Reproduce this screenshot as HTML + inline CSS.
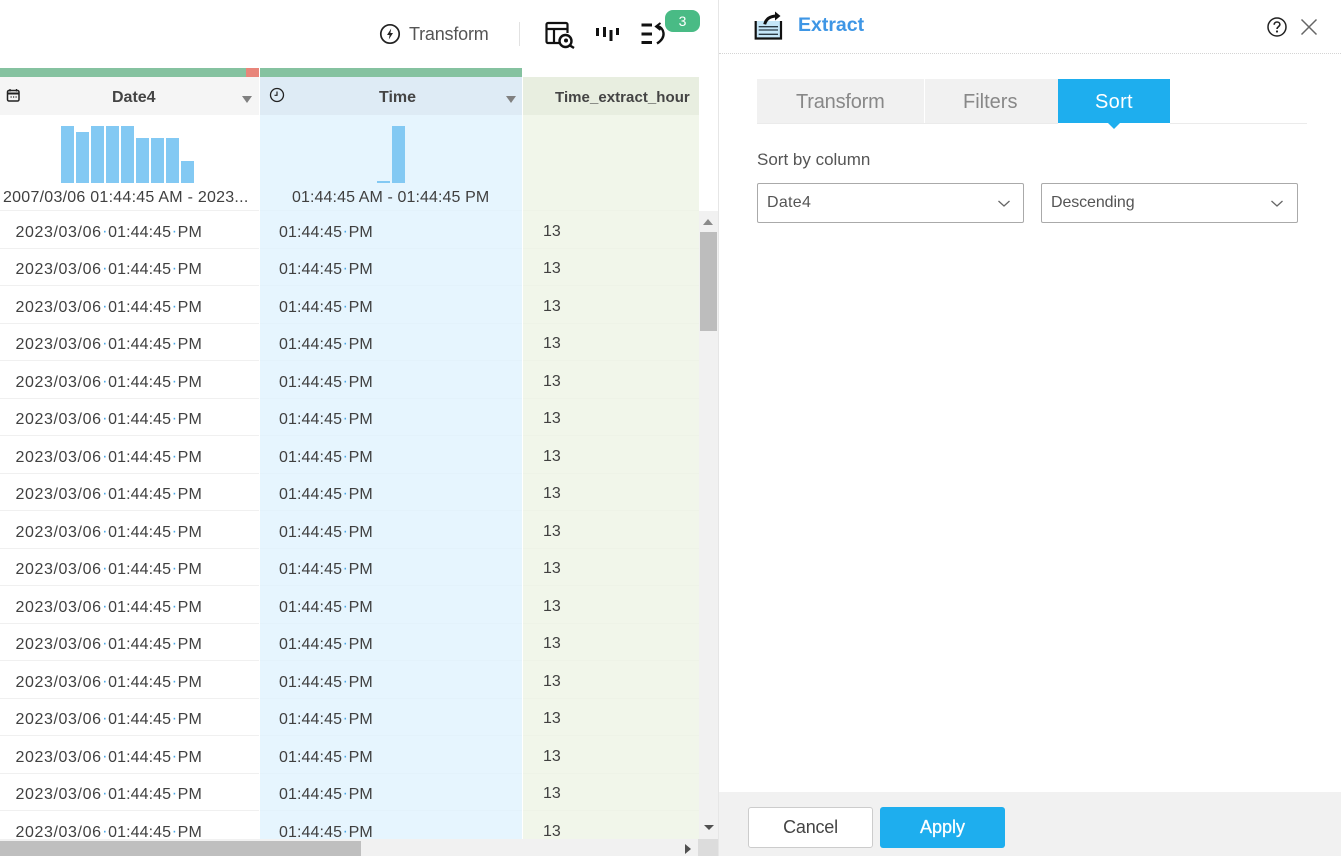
<!DOCTYPE html>
<html><head><meta charset="utf-8"><title>Extract</title>
<style>
*{box-sizing:border-box}
html,body{margin:0;padding:0;width:1341px;height:856px;overflow:hidden;background:#fff;font-family:"Liberation Sans",sans-serif;color:#444}
.x{position:absolute}
.t{position:absolute;white-space:nowrap;line-height:20px}
#grid{position:absolute;left:0;top:211px;width:699px;height:628px;overflow:hidden}
.r{position:absolute;left:0;width:699px;height:38px;font-size:16px;line-height:20px;color:#404040}
.r b{font-weight:normal;position:absolute;white-space:nowrap;letter-spacing:.1px}
.r b:nth-child(1){left:15.500px;top:11.500px}
.r b:nth-child(2){left:279px;top:11.500px}
.r b:nth-child(3){left:543px;top:10.500px;letter-spacing:0}
.r i{font-style:normal;color:#45a6e8;display:inline-block;width:6.500px;text-align:center;letter-spacing:0;position:relative;top:-1px}
.r em{font-style:normal;letter-spacing:.6px}
.r:after{content:"";position:absolute;left:0;top:36.500px;width:699px;height:1px;background:linear-gradient(90deg,#f0f0f0 0 259px,#fff 259px 260px,#e3f2fb 260px 522px,#fff 522px 523px,#eef3e7 523px)}
.bar{position:absolute;width:13px;bottom:673px;background:#83c9f3}
</style></head><body>

<!-- toolbar -->
<svg class="x" style="left:378px;top:22px" width="24" height="24" viewBox="0 0 24 24"><circle cx="12" cy="12" r="9.200" fill="none" stroke="#222" stroke-width="1.700"/><path d="M13.200 6.500 9 13h2.600l-.8 4.500L15 11h-2.600z" fill="#222"/></svg>
<div class="t" style="left:409px;top:24px;font-size:18px;color:#555;letter-spacing:-.2px">Transform</div>
<div class="x" style="left:519px;top:22px;width:1px;height:24px;background:#e2e2e2"></div>
<svg class="x" style="left:544px;top:20px" width="32" height="30" viewBox="0 0 32 30"><path d="M16 23H4a1.500 1.500 0 0 1-1.500-1.500V4.500A1.500 1.500 0 0 1 4 3h18a1.500 1.500 0 0 1 1.500 1.500V13" fill="none" stroke="#111" stroke-width="2.200"/><path d="M3 9h20M10 9v14" fill="none" stroke="#111" stroke-width="2.200"/><circle cx="21.500" cy="21" r="6" fill="#fff" stroke="#111" stroke-width="2.400"/><circle cx="22" cy="20.500" r="2" fill="#111"/><path d="M26 25.500 30 28" stroke="#111" stroke-width="2.400"/></svg>
<svg class="x" style="left:594px;top:24px" width="28" height="20" viewBox="0 0 28 20"><path d="M2 4h3v8H2zM9 3h3v10H9zM15.500 6h3v11h-3zM22 4h3v7h-3z" fill="#111"/></svg>
<svg class="x" style="left:640px;top:21px" width="26" height="25" viewBox="0 0 26 25"><path d="M1.500 2.500h10.500v3H1.500zM1.500 11.500h10.500v3H1.500zM1.500 20h10.500v3H1.500z" fill="#111"/><path d="M17 22.500C21 20 24 16.500 23.500 12 23 8.500 21 6 17.500 5" fill="none" stroke="#111" stroke-width="2.400"/><path d="M20.500 2 16 5.500l4.500 3.500" fill="none" stroke="#111" stroke-width="2"/></svg>
<div class="x" style="left:665px;top:10px;width:35px;height:22px;background:#49bb85;border-radius:8px;color:#fff;font-size:14px;line-height:22px;text-align:center">3</div>

<!-- column status bars -->
<div class="x" style="left:0;top:68px;width:246px;height:9px;background:#85c2a0"></div>
<div class="x" style="left:246px;top:68px;width:13px;height:9px;background:#e8857a"></div>
<div class="x" style="left:260px;top:68px;width:262px;height:9px;background:#85c2a0"></div>

<!-- column backgrounds -->
<div class="x" style="left:0;top:77px;width:259px;height:38px;background:#f5f5f5"></div>
<div class="x" style="left:260px;top:77px;width:262px;height:38px;background:#deebf5"></div>
<div class="x" style="left:523px;top:77px;width:176px;height:38px;background:#e8eee0"></div>
<div class="x" style="left:260px;top:115px;width:262px;height:725px;background:#e6f5fe"></div>
<div class="x" style="left:523px;top:115px;width:176px;height:725px;background:#f1f6ea"></div>

<!-- header content -->
<svg class="x" style="left:6px;top:88px" width="15" height="15" viewBox="0 0 15 15"><rect x="1.500" y="2.500" width="11.500" height="10.500" rx="1.500" fill="none" stroke="#222" stroke-width="1.500"/><path d="M1.500 5.500h11.500" stroke="#222" stroke-width="2"/><path d="M4 1v2.500M10.500 1v2.500" stroke="#222" stroke-width="1.300"/><path d="M4.500 9h1.200M7 9h1.200M9.500 9h1.200" stroke="#222" stroke-width="1.200"/></svg>
<div class="t" style="left:112px;top:88px;font-size:16px;font-weight:bold;color:#444">Date4</div>
<div class="x" style="left:242px;top:96px;width:0;height:0;border-left:5.500px solid transparent;border-right:5.500px solid transparent;border-top:7px solid #808080"></div>
<svg class="x" style="left:269px;top:87px" width="16" height="16" viewBox="0 0 16 16"><circle cx="8" cy="8" r="6.500" fill="none" stroke="#222" stroke-width="1.300"/><path d="M8 4.500V8.300H5.500" fill="none" stroke="#222" stroke-width="1.200"/></svg>
<div class="t" style="left:379px;top:88px;font-size:16px;font-weight:bold;color:#444">Time</div>
<div class="x" style="left:506px;top:96px;width:0;height:0;border-left:5.500px solid transparent;border-right:5.500px solid transparent;border-top:7px solid #808080"></div>
<div class="t" style="left:555px;top:88px;font-size:15px;font-weight:bold;color:#444;letter-spacing:.05px">Time_extract_hour</div>

<!-- histograms -->
<div style="position:absolute;left:0;top:0;width:699px;height:856px">
<div class="bar" style="left:61px;height:57px"></div>
<div class="bar" style="left:76px;height:51px"></div>
<div class="bar" style="left:91px;height:57px"></div>
<div class="bar" style="left:106px;height:57px"></div>
<div class="bar" style="left:121px;height:57px"></div>
<div class="bar" style="left:136px;height:45px"></div>
<div class="bar" style="left:151px;height:45px"></div>
<div class="bar" style="left:166px;height:45px"></div>
<div class="bar" style="left:181px;height:22px"></div>
<div class="bar" style="left:377px;height:2px"></div>
<div class="bar" style="left:392px;height:57px"></div>
</div>
<div class="t" style="left:3px;top:188px;font-size:16px;letter-spacing:.25px;color:#404040">2007/03/06 01:44:45 AM - 2023...</div>
<div class="t" style="left:292px;top:188px;font-size:16px;letter-spacing:.1px;color:#404040">01:44:45 AM - 01:44:45 PM</div>
<div class="x" style="left:0;top:210px;width:259px;height:1px;background:#f0f0f0"></div>
<div class="x" style="left:260px;top:210px;width:262px;height:1px;background:#e3f2fb"></div>
<div class="x" style="left:523px;top:210px;width:176px;height:1px;background:#eef3e7"></div>

<!-- rows -->
<div id="grid">
<div class="r" style="top:0"><b><em>2023/03/06</em><i>·</i>01:44:45<i>·</i>PM</b><b>01:44:45<i>·</i>PM</b><b>13</b></div>
<div class="r" style="top:37.500px"><b><em>2023/03/06</em><i>·</i>01:44:45<i>·</i>PM</b><b>01:44:45<i>·</i>PM</b><b>13</b></div>
<div class="r" style="top:75px"><b><em>2023/03/06</em><i>·</i>01:44:45<i>·</i>PM</b><b>01:44:45<i>·</i>PM</b><b>13</b></div>
<div class="r" style="top:112.500px"><b><em>2023/03/06</em><i>·</i>01:44:45<i>·</i>PM</b><b>01:44:45<i>·</i>PM</b><b>13</b></div>
<div class="r" style="top:150px"><b><em>2023/03/06</em><i>·</i>01:44:45<i>·</i>PM</b><b>01:44:45<i>·</i>PM</b><b>13</b></div>
<div class="r" style="top:187.500px"><b><em>2023/03/06</em><i>·</i>01:44:45<i>·</i>PM</b><b>01:44:45<i>·</i>PM</b><b>13</b></div>
<div class="r" style="top:225px"><b><em>2023/03/06</em><i>·</i>01:44:45<i>·</i>PM</b><b>01:44:45<i>·</i>PM</b><b>13</b></div>
<div class="r" style="top:262.500px"><b><em>2023/03/06</em><i>·</i>01:44:45<i>·</i>PM</b><b>01:44:45<i>·</i>PM</b><b>13</b></div>
<div class="r" style="top:300px"><b><em>2023/03/06</em><i>·</i>01:44:45<i>·</i>PM</b><b>01:44:45<i>·</i>PM</b><b>13</b></div>
<div class="r" style="top:337.500px"><b><em>2023/03/06</em><i>·</i>01:44:45<i>·</i>PM</b><b>01:44:45<i>·</i>PM</b><b>13</b></div>
<div class="r" style="top:375px"><b><em>2023/03/06</em><i>·</i>01:44:45<i>·</i>PM</b><b>01:44:45<i>·</i>PM</b><b>13</b></div>
<div class="r" style="top:412.500px"><b><em>2023/03/06</em><i>·</i>01:44:45<i>·</i>PM</b><b>01:44:45<i>·</i>PM</b><b>13</b></div>
<div class="r" style="top:450px"><b><em>2023/03/06</em><i>·</i>01:44:45<i>·</i>PM</b><b>01:44:45<i>·</i>PM</b><b>13</b></div>
<div class="r" style="top:487.500px"><b><em>2023/03/06</em><i>·</i>01:44:45<i>·</i>PM</b><b>01:44:45<i>·</i>PM</b><b>13</b></div>
<div class="r" style="top:525px"><b><em>2023/03/06</em><i>·</i>01:44:45<i>·</i>PM</b><b>01:44:45<i>·</i>PM</b><b>13</b></div>
<div class="r" style="top:562.500px"><b><em>2023/03/06</em><i>·</i>01:44:45<i>·</i>PM</b><b>01:44:45<i>·</i>PM</b><b>13</b></div>
<div class="r" style="top:600px"><b><em>2023/03/06</em><i>·</i>01:44:45<i>·</i>PM</b><b>01:44:45<i>·</i>PM</b><b>13</b></div>
</div>

<!-- scrollbars -->
<div class="x" style="left:699px;top:211px;width:19px;height:645px;background:#f1f1f1"></div>
<div class="x" style="left:703px;top:219px;width:0;height:0;border-left:5px solid transparent;border-right:5px solid transparent;border-bottom:6px solid #8a8a8a"></div>
<div class="x" style="left:700px;top:232px;width:17px;height:99px;background:#bdbdbd"></div>
<div class="x" style="left:704px;top:825px;width:0;height:0;border-left:5px solid transparent;border-right:5px solid transparent;border-top:5px solid #505050"></div>
<div class="x" style="left:0;top:839px;width:699px;height:17px;background:#f1f1f1"></div>
<div class="x" style="left:0;top:841px;width:361px;height:15px;background:#bfbfbf"></div>
<div class="x" style="left:685px;top:844px;width:0;height:0;border-top:5px solid transparent;border-bottom:5px solid transparent;border-left:6px solid #505050"></div>
<div class="x" style="left:698px;top:839px;width:20px;height:17px;background:#dcdcdc"></div>
<div class="x" style="left:718px;top:0;width:1px;height:856px;background:#e6e6e6"></div>

<!-- panel header -->
<svg class="x" style="left:752px;top:10px" width="32" height="32" viewBox="0 0 32 32"><path d="M3.500 11H29v18H3.500z" fill="#c5e6f8"/><path d="M3.700 11v17.500H29V11" fill="none" stroke="#111" stroke-width="2.200"/><path d="M6.700 16.700H26M6.700 20H26M6.700 24.300H26" fill="none" stroke="#2b3a44" stroke-width="1.300"/><path d="M12.700 14.300C14 9 18 6 25 6" fill="none" stroke="#111" stroke-width="3"/><path d="M23 1.500 28.500 6 23 10.500z" fill="#111"/></svg>
<div class="t" style="left:798px;top:14.500px;font-size:19.500px;font-weight:bold;color:#3e96e5">Extract</div>
<svg class="x" style="left:1266px;top:16px" width="22" height="22" viewBox="0 0 22 22"><circle cx="11" cy="11" r="9" fill="none" stroke="#222" stroke-width="1.500"/><path d="M8.200 8.800C8.200 7 9.500 6 11 6s2.900 1 2.900 2.500c0 2-2.900 2.300-2.900 4.500" fill="none" stroke="#222" stroke-width="1.600"/><circle cx="11" cy="15.500" r="1.100" fill="#222"/></svg>
<svg class="x" style="left:1300px;top:18px" width="18" height="18" viewBox="0 0 18 18"><path d="M1.500 1.500 16.500 16.500M16.500 1.500 1.500 16.500" stroke="#666" stroke-width="1.500"/></svg>
<div class="x" style="left:719px;top:53px;width:622px;height:0;border-top:1px dotted #d4d4d4"></div>

<!-- tabs -->
<div class="x" style="left:757px;top:79px;width:167px;height:45px;background:#f1f1f1"></div>
<div class="x" style="left:925px;top:79px;width:133px;height:45px;background:#f1f1f1"></div>
<div class="x" style="left:1170px;top:123px;width:137px;height:1px;background:#ebebeb"></div>
<div class="x" style="left:757px;top:123px;width:301px;height:1px;background:#ebebeb"></div>
<div class="x" style="left:1058px;top:79px;width:112px;height:44px;background:#1eaeee"></div>
<div class="x" style="left:1108px;top:123px;width:0;height:0;border-left:6px solid transparent;border-right:6px solid transparent;border-top:6px solid #1eaeee"></div>
<div class="t" style="left:796px;top:92px;font-size:20px;color:#888;letter-spacing:-.2px">Transform</div>
<div class="t" style="left:963px;top:92px;font-size:20px;color:#888">Filters</div>
<div class="t" style="left:1095px;top:92px;font-size:20px;color:#fff;letter-spacing:.3px">Sort</div>

<!-- form -->
<div class="t" style="left:757px;top:150px;font-size:17px;color:#555">Sort by column</div>
<div class="x" style="left:757px;top:183px;width:267px;height:40px;border:1px solid #aaa;border-radius:2px;background:#fff"></div>
<div class="t" style="left:767px;top:193px;font-size:16px;color:#555;letter-spacing:.3px">Date4</div>
<svg class="x" style="left:997px;top:198px" width="14" height="10" viewBox="0 0 14 10"><path d="M1.500 3 7 8 12.500 3" fill="none" stroke="#666" stroke-width="1.300"/></svg>
<div class="x" style="left:1041px;top:183px;width:257px;height:40px;border:1px solid #aaa;border-radius:2px;background:#fff"></div>
<div class="t" style="left:1051px;top:193px;font-size:16px;color:#555;letter-spacing:-.1px">Descending</div>
<svg class="x" style="left:1270px;top:198px" width="14" height="10" viewBox="0 0 14 10"><path d="M1.500 3 7 8 12.500 3" fill="none" stroke="#666" stroke-width="1.300"/></svg>

<!-- footer -->
<div class="x" style="left:719px;top:792px;width:622px;height:64px;background:#f1f1f1"></div>
<div class="x" style="left:748px;top:807px;width:125px;height:41px;background:#fff;border:1px solid #ccc;border-radius:3px;text-align:center;font-size:18px;line-height:38px;color:#444;letter-spacing:-.2px">Cancel</div>
<div class="x" style="left:880px;top:807px;width:125px;height:41px;background:#1eaeee;border-radius:3px;text-align:center;font-size:18px;line-height:40px;color:#fff;-webkit-text-stroke:.3px #fff">Apply</div>
</body></html>
